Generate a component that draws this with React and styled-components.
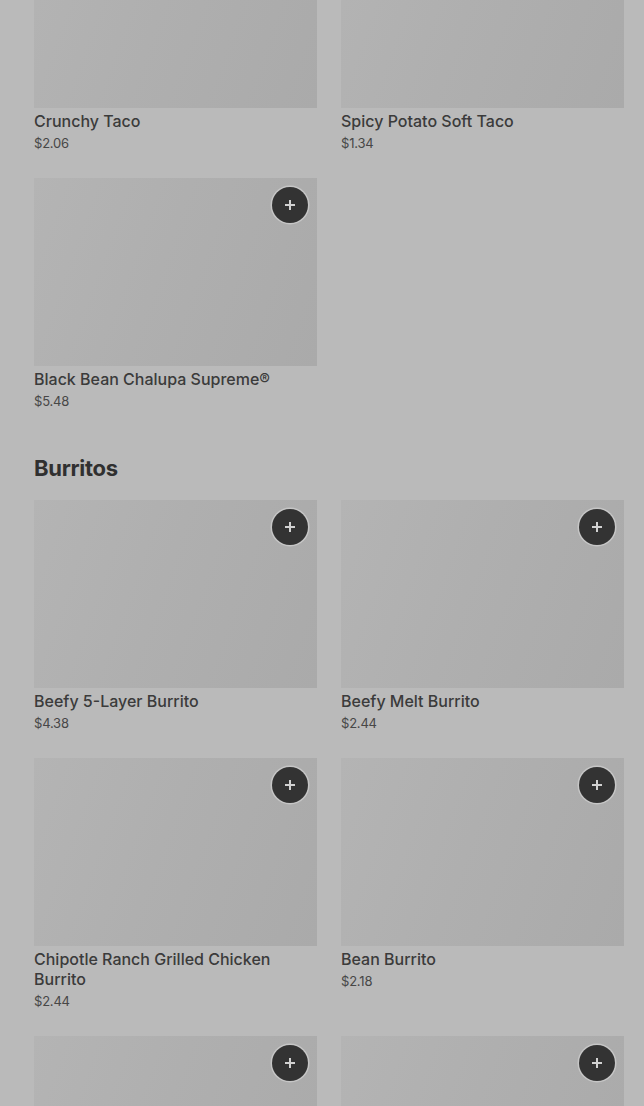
import React from 'react';
import styled, { createGlobalStyle } from 'styled-components';

const GlobalStyle = createGlobalStyle`
  html, body {
    margin: 0;
    padding: 0;
    background: #bababa;
    font-family: Inter, "Liberation Sans", sans-serif;
    overflow: hidden;
  }
`;

const tacos = [
  { id: 't1', name: 'Crunchy Taco', price: '$2.06' },
  { id: 't2', name: 'Spicy Potato Soft Taco', price: '$1.34' },
  { id: 't3', name: 'Black Bean Chalupa Supreme®', price: '$5.48' },
];

// the last two burritos are only scrolled in as far as their pictures
const burritos = [
  { id: 'b1', name: 'Beefy 5-Layer Burrito', price: '$4.38' },
  { id: 'b2', name: 'Beefy Melt Burrito', price: '$2.44' },
  { id: 'b3', name: 'Chipotle Ranch Grilled Chicken Burrito', price: '$2.44' },
  { id: 'b4', name: 'Bean Burrito', price: '$2.18' },
  { id: 'b5' },
  { id: 'b6' },
];

const PlusIcon = () => (
  <svg width="12" height="12" viewBox="0 0 12 12" fill="none">
    <path d="M6 1v10M1 6h10" stroke="#d2d2d2" strokeWidth="2" />
  </svg>
);

const ItemCard = ({ name, price }) => (
  <Card>
    <ImageBox>
      <AddButton aria-label="Add item">
        <PlusIcon />
      </AddButton>
    </ImageBox>
    {name && <ItemName>{name}</ItemName>}
    {price && <ItemPrice>{price}</ItemPrice>}
  </Card>
);

const App = () => (
  <>
    <GlobalStyle />
    <Page>
      <Section first>
        <Grid>
          {tacos.map(item => (
            <ItemCard key={item.id} {...item} />
          ))}
        </Grid>
      </Section>
      <Section>
        <Heading>Burritos</Heading>
        <Grid>
          {burritos.map(item => (
            <ItemCard key={item.id} {...item} />
          ))}
        </Grid>
      </Section>
    </Page>
  </>
);

export default App;

const Page = styled.div`
  padding: 0 20px 0 34px;
  height: 1106px;
  overflow: hidden;
  background: #bababa;
`;

const Section = styled.section`
  margin-top: ${props => (props.first ? '-80px' : '43px')};
`;

const Heading = styled.h2`
  margin: 0 0 18px;
  font-size: 22px;
  line-height: 28px;
  font-weight: 700;
  color: #303030;
  letter-spacing: -0.3px;
`;

const Grid = styled.div`
  display: grid;
  grid-template-columns: 283px 283px;
  column-gap: 24px;
  row-gap: 25px;
`;

const Card = styled.div`
  display: flex;
  flex-direction: column;
`;

const ImageBox = styled.div`
  position: relative;
  height: 188px;
  background: linear-gradient(110deg, #b4b4b4 0%, #afafaf 45%, #aaaaaa 100%);
`;

const AddButton = styled.button`
  position: absolute;
  top: 9px;
  right: 9px;
  width: 36px;
  height: 36px;
  padding: 0;
  border: none;
  border-radius: 50%;
  background: #333333;
  box-shadow: 0 0 0 1.5px #c6c6c6;
  display: flex;
  align-items: center;
  justify-content: center;
  cursor: pointer;
`;

const ItemName = styled.div`
  margin-top: 3px;
  font-size: 16px;
  line-height: 20px;
  font-weight: 500;
  color: #3b3b3b;
`;

const ItemPrice = styled.div`
  margin-top: 2px;
  font-size: 13px;
  line-height: 20px;
  letter-spacing: -0.2px;
  color: #474747;
`;
